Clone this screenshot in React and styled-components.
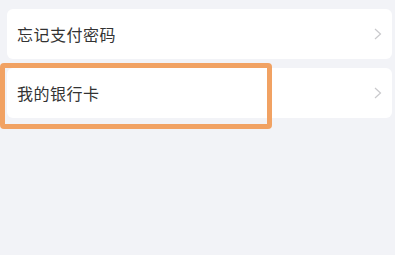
import styled, { createGlobalStyle } from 'styled-components';

const GlobalStyle = createGlobalStyle`
  html, body {
    margin: 0;
    padding: 0;
    background: #f2f3f7;
    font-family: "Noto Sans CJK SC", "Noto Sans", sans-serif;
  }
`

const Page = styled.div`
  height: 255px;
  padding: 9px 3px 0 7px;
  box-sizing: border-box;
  display: flex;
  flex-direction: column;
  gap: 9px;
`

const Row = styled.div`
  position: relative;
  height: 50px;
  background: #ffffff;
  border-radius: 6px;
  display: flex;
  align-items: center;
  justify-content: space-between;
  padding: 0 10px 0 10px;
`

const Label = styled.span`
  font-size: 16px;
  color: #333333;
  letter-spacing: 0.5px;
`

const Chevron = styled.svg`
  width: 8px;
  height: 12px;
  margin-right: 0;
`

const Highlight = styled.div`
  position: absolute;
  left: -7px;
  top: -5px;
  width: 272px;
  height: 66px;
  box-sizing: border-box;
  border: 5px solid #f1a263;
  border-radius: 4px;
  pointer-events: none;
`

const items = [
  { label: '忘记支付密码' },
  { label: '我的银行卡', active: true },
]

const App = () => {
  return (
    <>
      <GlobalStyle />
      <Page>
        {items.map((item) => (
          <Row key={item.label}>
            <Label>{item.label}</Label>
            <Chevron viewBox="0 0 8 12">
              <path d="M1 1l5.5 5L1 11" fill="none" stroke="#c9c9cc" strokeWidth="1.2" />
            </Chevron>
            {item.active && <Highlight />}
          </Row>
        ))}
      </Page>
    </>
  )
}

export default App
